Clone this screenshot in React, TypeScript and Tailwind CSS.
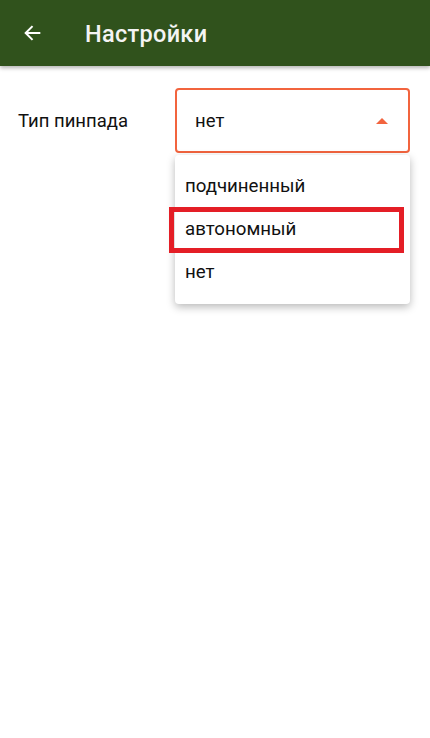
import React from 'react';

const font = { fontFamily: 'Roboto, "Noto Sans", sans-serif' };

export default function App() {
  const options = ['подчиненный', 'автономный', 'нет'];

  return (
    <div className="w-[430px] h-[738px] bg-white relative overflow-hidden" style={font}>
      {/* toolbar */}
      <header className="h-[66px] bg-[#30521c] flex items-center shadow-[0_2px_4px_rgba(0,0,0,0.3)] relative z-10">
        <div className="w-[64px] flex justify-center pl-[1px]">
          <svg width="22" height="22" viewBox="0 0 24 24" fill="none">
            <path d="M20 12H4.5M11.5 4.5L4 12l7.5 7.5" stroke="#ffffff" strokeWidth="2.2" />
          </svg>
        </div>
        <h1 className="ml-[21px] mt-[3px] text-[23.5px] font-medium text-[#f4f4f4] tracking-[0.3px]">Настройки</h1>
      </header>

      {/* setting row */}
      <div className="flex items-start pt-[22px] pl-[18px]">
        <div className="w-[157px] pt-[22px] text-[18.5px] text-[#111111] leading-[22px]">Тип пинпада</div>

        <div className="relative">
          <div className="w-[235px] h-[65px] border-2 border-[#f2643e] rounded-[4px] flex items-center justify-between pl-[18px] pr-[20px]">
            <span className="pt-[3px] text-[18.5px] text-[#111111]">нет</span>
            <svg width="12" height="6" viewBox="0 0 12 6">
              <path d="M0 6L6 0l6 6z" fill="#f2643e" />
            </svg>
          </div>

          {/* dropdown */}
          <div className="absolute left-0 top-[67px] w-[235px] bg-white rounded-[4px] shadow-[0_3px_8px_rgba(0,0,0,0.28)] py-[10px]">
            {options.map((o) => (
              <div key={o} className="h-[43px] flex items-center pl-[10px] text-[18.7px] text-[#111111]">
                {o}
              </div>
            ))}
            <div className="absolute left-[-6px] top-[52px] w-[235px] h-[46px] border-[5px] border-[#e41e26]" />
          </div>
        </div>
      </div>
    </div>
  );
}
